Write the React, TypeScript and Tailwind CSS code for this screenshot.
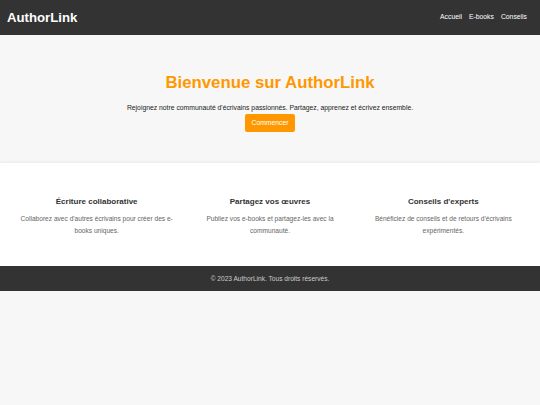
import React from "react";

const features = [
  {
    title: "Écriture collaborative",
    text: "Collaborez avec d'autres écrivains pour créer des e-books uniques.",
  },
  {
    title: "Partagez vos œuvres",
    text: "Publiez vos e-books et partagez-les avec la communauté.",
  },
  {
    title: "Conseils d'experts",
    text: "Bénéficiez de conseils et de retours d'écrivains expérimentés.",
  },
];

export default function App() {
  return (
    <div
      className="min-h-[405px] bg-[#f7f7f7] text-[#333]"
      style={{ fontFamily: '"Liberation Sans", Arial, sans-serif' }}
    >
      {/* Header */}
      <header className="h-[35px] bg-[#333] flex items-center justify-between pl-[7px] pr-[13px]">
        <h1 className="text-[13.2px] font-bold text-white leading-none">AuthorLink</h1>
        <nav className="flex gap-[7px] text-[6.8px] text-white">
          <a href="#">Accueil</a>
          <a href="#">E-books</a>
          <a href="#">Conseils</a>
        </nav>
      </header>

      {/* Hero */}
      <section className="flex flex-col items-center pt-[38px] pb-[31px]">
        <h2 className="text-[16.8px] leading-[20px] font-bold text-[#ff9800]">
          Bienvenue sur AuthorLink
        </h2>
        <p className="mt-[10px] text-[6.8px] leading-[9px] text-[#222]">
          Rejoignez notre communauté d'écrivains passionnés. Partagez, apprenez et écrivez ensemble.
        </p>
        <button className="mt-[2px] h-[18px] w-[50px] rounded-[2px] bg-[#ff9800] text-[6.8px] text-white">
          Commencer
        </button>
      </section>

      {/* Features */}
      <section className="bg-white shadow-[0_-1px_3px_rgba(0,0,0,0.06)] grid grid-cols-3 px-[10px] pt-[34px] pb-[29px]">
        {features.map((f) => (
          <div key={f.title} className="flex flex-col items-center px-[8px] text-center">
            <h3 className="text-[8px] leading-[10px] font-bold text-[#333]">{f.title}</h3>
            <p className="mt-[6px] text-[6.6px] leading-[12px] text-[#666]">{f.text}</p>
          </div>
        ))}
      </section>

      {/* Footer */}
      <footer className="h-[25px] bg-[#333] flex items-center justify-center text-[6.6px] text-[#ccc]">
        © 2023 AuthorLink. Tous droits réservés.
      </footer>
    </div>
  );
}
